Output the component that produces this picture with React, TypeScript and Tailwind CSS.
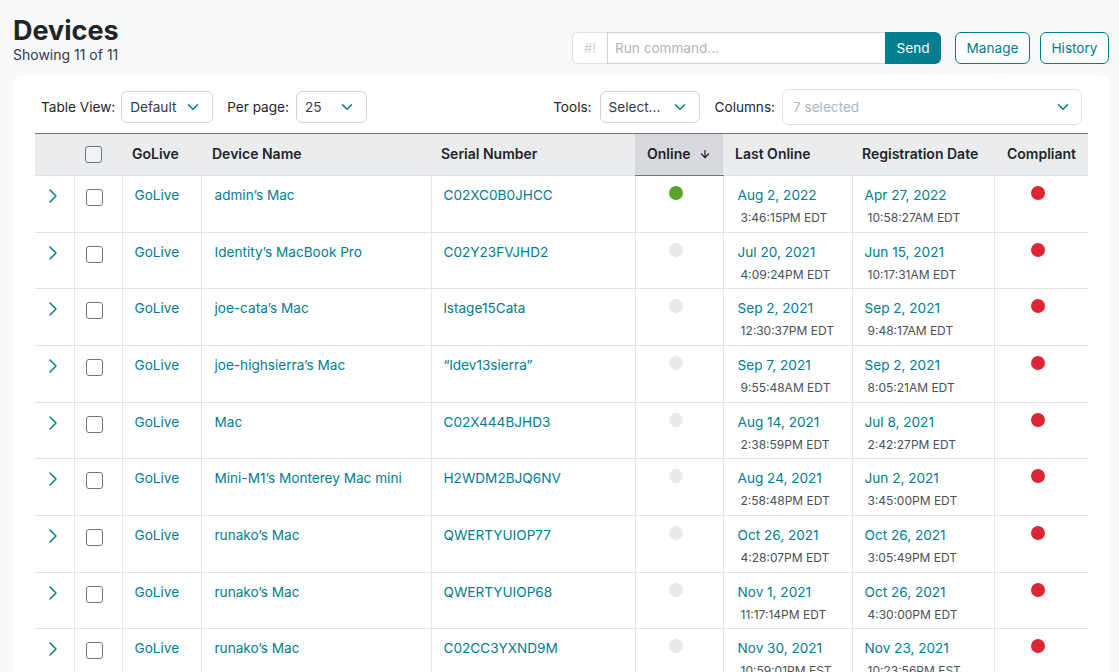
import { ChevronDown, ChevronRight, ArrowDown } from "lucide-react";

type Device = {
  name: string; serial: string; online: boolean;
  lastDate: string; lastTime: string; regDate: string; regTime: string;
};

const devices: Device[] = [
  { name: "admin’s Mac", serial: "C02XC0B0JHCC", online: true, lastDate: "Aug 2, 2022", lastTime: "3:46:15PM EDT", regDate: "Apr 27, 2022", regTime: "10:58:27AM EDT" },
  { name: "Identity’s MacBook Pro", serial: "C02Y23FVJHD2", online: false, lastDate: "Jul 20, 2021", lastTime: "4:09:24PM EDT", regDate: "Jun 15, 2021", regTime: "10:17:31AM EDT" },
  { name: "joe-cata’s Mac", serial: "lstage15Cata", online: false, lastDate: "Sep 2, 2021", lastTime: "12:30:37PM EDT", regDate: "Sep 2, 2021", regTime: "9:48:17AM EDT" },
  { name: "joe-highsierra’s Mac", serial: "“ldev13sierra”", online: false, lastDate: "Sep 7, 2021", lastTime: "9:55:48AM EDT", regDate: "Sep 2, 2021", regTime: "8:05:21AM EDT" },
  { name: "Mac", serial: "C02X444BJHD3", online: false, lastDate: "Aug 14, 2021", lastTime: "2:38:59PM EDT", regDate: "Jul 8, 2021", regTime: "2:42:27PM EDT" },
  { name: "Mini-M1’s Monterey Mac mini", serial: "H2WDM2BJQ6NV", online: false, lastDate: "Aug 24, 2021", lastTime: "2:58:48PM EDT", regDate: "Jun 2, 2021", regTime: "3:45:00PM EDT" },
  { name: "runako’s Mac", serial: "QWERTYUIOP77", online: false, lastDate: "Oct 26, 2021", lastTime: "4:28:07PM EDT", regDate: "Oct 26, 2021", regTime: "3:05:49PM EDT" },
  { name: "runako’s Mac", serial: "QWERTYUIOP68", online: false, lastDate: "Nov 1, 2021", lastTime: "11:17:14PM EDT", regDate: "Oct 26, 2021", regTime: "4:30:00PM EDT" },
  { name: "runako’s Mac", serial: "C02CC3YXND9M", online: false, lastDate: "Nov 30, 2021", lastTime: "10:59:01PM EST", regDate: "Nov 23, 2021", regTime: "10:23:56PM EST" },
];

function Select({ value, className }: { value: string; className: string }) {
  return (
    <div className={`flex h-8 items-center justify-between rounded-md border border-[#ced4da] bg-white pl-2 pr-[10px] text-[#343a40] ${className}`}>
      <span>{value}</span>
      <ChevronDown className="h-[18px] w-[18px] text-[#007d8f]" strokeWidth={2} />
    </div>
  );
}

function DateCell({ date, time, datePad, timePad }: { date: string; time: string; datePad: string; timePad: string }) {
  return (
    <td className="border-r border-[#e4e6e9] pt-[9px] align-top">
      <div className={`leading-[20px] text-[#007d8f] ${datePad}`}>{date}</div>
      <div className={`mt-[4px] text-[12px] leading-[18px] text-[#495057] ${timePad}`}>{time}</div>
    </td>
  );
}

export default function App() {
  return (
    <div className="h-[672px] overflow-hidden bg-[#f8f9fb] [font-family:Inter,sans-serif] text-[13.6px] text-[#212529]">
      <div className="flex h-[75px] items-start justify-between pl-[13px] pr-[10px]">
        <div className="pt-[14px]">
          <h1 className="text-[27px] font-bold leading-[33px] text-[#212529]">Devices</h1>
          <p className="text-[14px] leading-[16px] text-[#343a40]">Showing 11 of 11</p>
        </div>
        <div className="flex pt-[32px]">
          <div className="flex h-8 w-[369px]">
            <span className="flex w-[35px] items-center justify-center rounded-l-md border border-r-0 border-[#dee2e6] bg-white pt-px text-[#ced4da]">#!</span>
            <span className="flex flex-1 items-center border border-r-0 border-[#ced4da] bg-white pl-[7px] pt-px text-[#adb5bd]">Run command...</span>
            <span className="flex w-[56px] items-center justify-center rounded-r-md bg-[#007d8f] pt-px text-white">Send</span>
          </div>
          <span className="ml-[14px] flex h-8 w-[75px] items-center justify-center rounded-md border border-[#007d8f] bg-white pt-px text-[#007d8f]">Manage</span>
          <span className="ml-[10px] flex h-8 w-[69px] items-center justify-center rounded-md border border-[#007d8f] bg-white pt-px text-[#007d8f]">History</span>
        </div>
      </div>

      <div className="ml-[13px] mr-[10px] rounded-t-lg bg-white px-[22px]">
        <div className="flex h-[58px] items-center pt-[6px] pr-[5px]">
          <span className="mx-[6px]">Table View:</span>
          <Select value="Default" className="w-[92px]" />
          <span className="ml-[14px] mr-[7px]">Per page:</span>
          <Select value="25" className="w-[71px]" />
          <span className="ml-auto mr-[8px]">Tools:</span>
          <Select value="Select..." className="w-[100px]" />
          <span className="ml-[15px] mr-[7px]">Columns:</span>
          <div className="flex h-[36px] w-[300px] items-center justify-between rounded-md border border-[#dee2e6] bg-white pl-[10px] pr-[9px] text-[#adb5bd]">
            <span>7 selected</span>
            <ChevronDown className="h-[18px] w-[18px] text-[#007d8f]" strokeWidth={2} />
          </div>
        </div>

        <table className="w-[1053px] table-fixed border-collapse">
          <colgroup>
            <col className="w-[39px]" />
            <col className="w-[48px]" />
            <col className="w-[79px]" />
            <col className="w-[230px]" />
            <col className="w-[204px]" />
            <col className="w-[88px]" />
            <col className="w-[129px]" />
            <col className="w-[142px]" />
            <col className="w-[94px]" />
          </colgroup>
          <thead>
            <tr className="h-[42px] border-y border-t-[#6c757d] border-b-[#dee2e6] bg-[#ebecee] text-left text-[14px] text-[#212529]">
              <th></th>
              <th className="pl-[11px] pb-[1px]">
                <span className="block h-[17px] w-[17px] rounded-[3px] border border-[#6c757d] bg-[#f1f2f4]" />
              </th>
              <th className="pl-[10px] pb-[2px] font-semibold">GoLive</th>
              <th className="pl-[11px] pb-[2px] font-semibold">Device Name</th>
              <th className="pl-[10px] pb-[2px] font-semibold">Serial Number</th>
              <th className="border-b border-b-[#6c757d] bg-[#d8d9dc] pl-[12px] pb-[2px] font-semibold">
                <span className="flex items-center gap-[8px]">Online <ArrowDown className="h-3 w-3" strokeWidth={2.5} /></span>
              </th>
              <th className="pl-[12px] pb-[2px] font-semibold">Last Online</th>
              <th className="pl-[10px] pb-[2px] font-semibold">Registration Date</th>
              <th className="pl-[13px] pb-[2px] font-semibold">Compliant</th>
            </tr>
          </thead>
          <tbody>
            {devices.map((d, i) => (
              <tr key={i} className="h-[56.67px] border-b border-[#dee2e6]">
                <td className="border-r border-[#e4e6e9] pt-[8px] pl-[6px] align-top">
                  <ChevronRight className="h-[24px] w-[24px] text-[#007d8f]" strokeWidth={1.5} />
                </td>
                <td className="border-r border-[#e4e6e9] pt-[13px] pl-[11px] align-top">
                  <span className="block h-[17px] w-[17px] rounded-[3px] border border-[#6c757d] bg-white" />
                </td>
                <td className="border-r border-[#e4e6e9] pt-[9px] pl-[12px] align-top leading-[20px] text-[#007d8f]">GoLive</td>
                <td className="border-r border-[#e4e6e9] pt-[9px] pl-[13px] align-top leading-[20px] text-[#007d8f]">{d.name}</td>
                <td className="border-r border-[#e4e6e9] pt-[9px] pl-[12px] align-top leading-[20px] text-[#007d8f]">{d.serial}</td>
                <td className="border-r border-[#e4e6e9] pt-[10px] pr-[6px] align-top">
                  <span className={`mx-auto block h-[14px] w-[14px] rounded-full ${d.online ? "bg-[#58a12b]" : "bg-[#e8e9ea]"}`} />
                </td>
                <DateCell date={d.lastDate} time={d.lastTime} datePad="pl-[14px]" timePad="pl-[17px]" />
                <DateCell date={d.regDate} time={d.regTime} datePad="pl-[12px]" timePad="pl-[15px]" />
                <td className="pt-[10px] pr-[6px] align-top">
                  <span className="mx-auto block h-[14px] w-[14px] rounded-full bg-[#dc2636]" />
                </td>
              </tr>
            ))}
          </tbody>
        </table>
      </div>
    </div>
  );
}
